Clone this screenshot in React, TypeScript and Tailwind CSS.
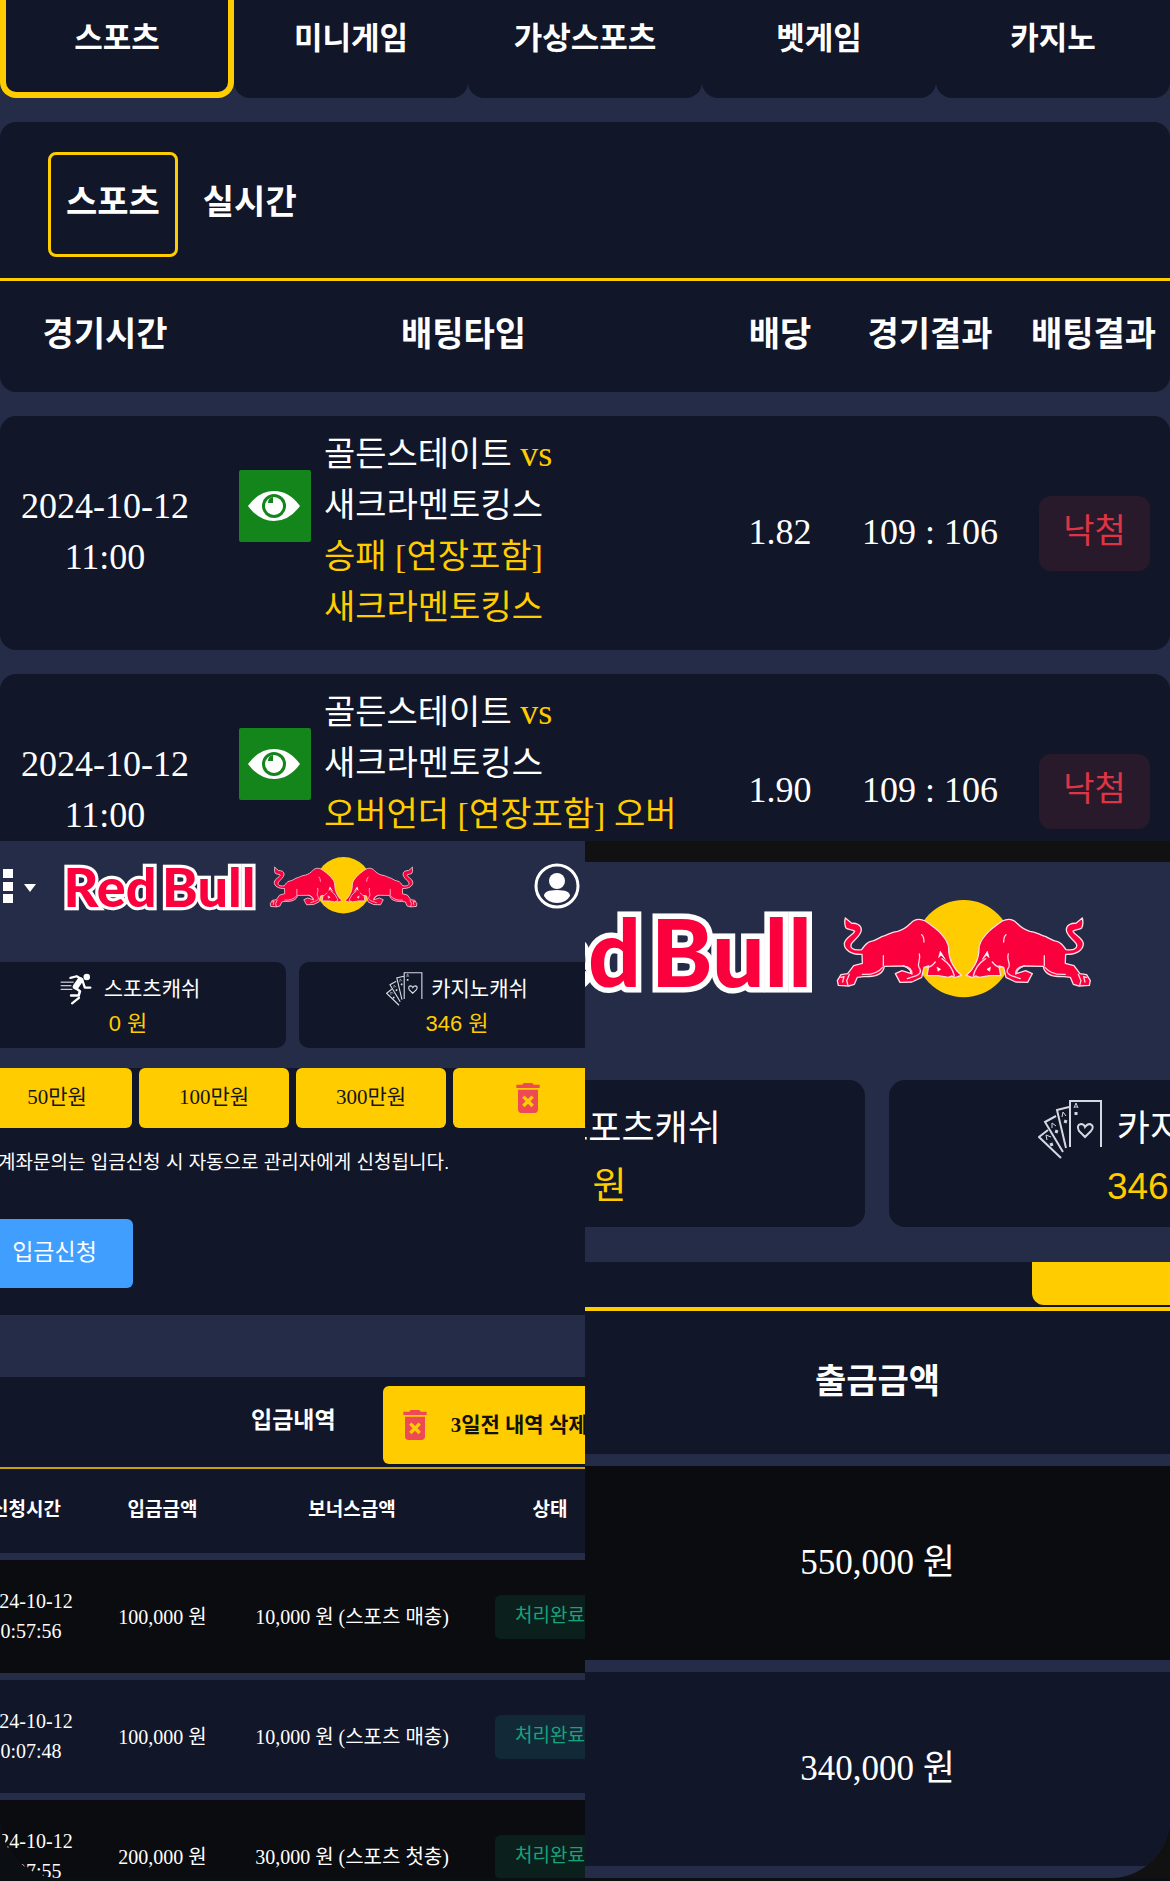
import { MdDeleteForever } from "react-icons/md";

const GAME_TABS = ["스포츠", "미니게임", "가상스포츠", "벳게임", "카지노"];
const BET_HEADS = ["경기시간", "배팅타입", "배당", "경기결과", "배팅결과"];
const DEPOSIT_HEADS = ["신청시간", "입금금액", "보너스금액", "상태"];
const QUICK_AMOUNTS = ["50", "100", "300"];

type Bet = { day: string; time: string; home: string; away: string; picks: string[]; odds: string; score: string; result: string };

const BETS: Bet[] = [
    {
        day: "2024-10-12", time: "11:00", home: "골든스테이트", away: "새크라멘토킹스",
        picks: ["승패 [연장포함]", "새크라멘토킹스"], odds: "1.82", score: "109 : 106", result: "낙첨",
    },
    {
        day: "2024-10-12", time: "11:00", home: "골든스테이트", away: "새크라멘토킹스",
        picks: ["오버언더 [연장포함] 오버"], odds: "1.90", score: "109 : 106", result: "낙첨",
    },
];

const DEPOSITS = [
    { day: "2024-10-12", time: "10:57:56", amount: "100,000", bonus: "10,000 원 (스포츠 매충)" },
    { day: "2024-10-12", time: "10:07:48", amount: "100,000", bonus: "10,000 원 (스포츠 매충)" },
    { day: "2024-10-12", time: "10:07:55", amount: "200,000", bonus: "30,000 원 (스포츠 첫충)" },
];

const WITHDRAWALS = ["550,000", "340,000"];

const BULL =
    "M76 114L95 130C108 129 124 134 124 149C124 165 105 177 95 190C88 202 98 213 125 209C133 198 138 189 150 185C165 183 172 177 185 170C205 165 215 155 233 154C250 150 262 140 272 130C282 119 297 114 316 123C335 136 352 148 365 163C378 178 386 189 386 206C386 240 404 270 424 286L405 293L396 288L385 292L355 287L321 287L326 258L312 262L305 292L276 306L240 307L226 281L246 272L274 281C272 270 262 262 250 258L193 259C190 282 165 291 131 290L112 292L103 313L86 318L55 316L52 302L63 284L83 281L101 257L127 250L126 223C95 224 72 211 73 190C76 172 100 165 104 154C98 148 84 150 78 144C73 134 74 122 76 114Z";

const Bull = () => (
    <g strokeLinejoin="round" strokeLinecap="round">
        <path d={BULL} fill="#fa003c" stroke="#f7dfe6" strokeWidth="4" />
        <g fill="none" stroke="#ffd3df" strokeWidth="4">
            <path d="M190 227L190 257M127 283Q168 286 188 262M298 222C304 240 290 250 297 262C306 274 302 284 280 290L262 296" />
            <path d="M312 186Q312 170 305 164M366 236Q396 256 403 288M88 283L80 302L84 316M63 292L72 290L68 306" />
            <path d="M250 258Q276 262 276 282M318 262Q332 264 346 246" />
        </g>
        <path d="M356 232L361 214L376 238L364 226Z M352 262L362 268L355 273Z" fill="#fff" stroke="#fff" strokeWidth="2" />
    </g>
);

const Logo = ({ className }: { className: string }) => (
    <svg viewBox="0 0 610 100" className={className} role="img" aria-label="Red Bull">
        <g fontSize="93" fontWeight="900" fill="#fa003c" stroke="#fff" strokeWidth="11" paintOrder="stroke" className="font-['Lato',sans-serif]">
            <text x="-1" y="87">Red</text>
            <text x="169" y="87">Bull</text>
        </g>
        <g transform="translate(338 -20) scale(.3333)">
            <circle cx="431" cy="206" r="146" fill="#ffcc00" />
            <Bull />
            <g transform="translate(863 0) scale(-1 1)">
                <Bull />
            </g>
        </g>
    </svg>
);

const Eye = () => (
    <svg viewBox="0 0 72 72" className="size-[72px] shrink-0" aria-hidden="true">
        <rect width="72" height="72" rx="2" fill="#13851b" />
        <path d="M9 36Q20 21 35 21Q50 21 61 36Q50 51 35 51Q20 51 9 36Z" fill="#fff" />
        <circle cx="35" cy="36" r="12" fill="#13851b" />
        <circle cx="35" cy="36" r="9" fill="#fff" />
        <path d="M34 27V33H29Q29 28 34 27Z" fill="#13851b" />
    </svg>
);

const Runner = ({ className }: { className: string }) => (
    <svg viewBox="178 68 98 98" className={className} fill="none" stroke="#fff" strokeLinecap="round" strokeLinejoin="round" aria-hidden="true">
        <circle cx="260" cy="80" r="10" fill="#fff" stroke="none" />
        <path d="M180 96H220M180 107H213M180 118H216" strokeWidth="3" strokeLinecap="butt" />
        <path d="M210 83L229 78L246 88L254 113H271" strokeWidth="7" />
        <path d="M240 90L226 110" strokeWidth="18" />
        <path d="M226 114L239 124L235 137H212" strokeWidth="8" />
        <path d="M236 144L215 161" strokeWidth="7" />
    </svg>
);

const Cards = ({ className }: { className: string }) => (
    <svg viewBox="0 0 65 59" className={className} fill="none" stroke="#d5d8e2" strokeWidth="2" aria-hidden="true">
        <path d="M32 47V1H63V47M31 7L19 10L28 48M18 16L7 22L25 52M10 30L1 37L23 58" />
        <path d="M47 37L41 31Q38 25 43 24Q46 24 47 27Q49 24 52 24Q57 26 53 31Z" />
        <path d="M36 8L38 3L40 8M37 7H39M24 17L25 12L28 16M14 28L14 23L18 26M9 40L8 35L13 37" strokeWidth="1" />
        <path d="M38 15V12M27 23L28 20M18 33L19 30M14 46L13 43" strokeWidth="3" />
    </svg>
);

const BettingHistory = () => (
    <section>
        <nav className="grid grid-cols-5">
            {GAME_TABS.map((tab, i) => (
                <button
                    key={tab}
                    className={`rounded-b-2xl border-6 border-t-0 bg-[#111628] pt-[15px] pb-[29px] text-[31px] leading-12 font-bold ${i === 0 ? "border-[#ffcc00]" : "border-transparent"}`}
                >
                    {tab}
                </button>
            ))}
        </nav>
        <div className="mt-6 flex items-start gap-3 rounded-t-2xl border-b-3 border-[#ffcc00] bg-[#111628] px-12 pt-[30px] pb-[21px] text-[34px] leading-[51px] font-bold">
            <button className="rounded-lg border-3 border-[#ffcc00] px-[15px] pt-[22px] pb-[26px]">스포츠</button>
            <button className="border-3 border-transparent px-2.5 pt-[22px] pb-[26px]">실시간</button>
        </div>
        <table className="-my-6 w-full table-fixed border-separate border-spacing-x-0 border-spacing-y-6">
            <colgroup>
                <col className="w-[210px]" />
                <col />
                <col className="w-[126px]" />
                <col className="w-[174px]" />
                <col className="w-[153px]" />
            </colgroup>
            <thead>
                <tr className="bg-[#111628] text-[34px] leading-[51px]">
                    {BET_HEADS.map((head) => (
                        <th key={head} className="pt-7 pb-8 font-bold whitespace-nowrap first:rounded-bl-2xl last:rounded-br-2xl">{head}</th>
                    ))}
                </tr>
            </thead>
            <tbody>
                {BETS.map((bet, i) => (
                    <tr key={i} className="bg-[#111628] text-center align-top text-4xl leading-[51px]">
                        <td className={`rounded-tl-2xl pt-[65px] ${i === 0 ? "rounded-bl-2xl" : ""}`}>
                            {bet.day}<br />{bet.time}
                        </td>
                        <td className={`pt-[13px] text-left ${i === 0 ? "pb-[17px]" : ""}`}>
                            <div className="flex gap-[13px] pl-[29px]">
                                <button className="mt-[41px] self-start" aria-label="경기 보기"><Eye /></button>
                                <div className="text-[34px] whitespace-nowrap">
                                    <p>{bet.home} <span className="text-4xl leading-[1px] text-[#ffcc00]">vs</span></p>
                                    <p>{bet.away}</p>
                                    {bet.picks.map((pick) => (
                                        <p key={pick} className="text-[#ffcc00]">{pick}</p>
                                    ))}
                                </div>
                            </div>
                        </td>
                        <td className="pt-[91px]">{bet.odds}</td>
                        <td className="pt-[91px]">{bet.score}</td>
                        <td className={`rounded-tr-2xl pt-20 pl-0.5 ${i === 0 ? "rounded-br-2xl" : ""}`}>
                            <span className="inline-block rounded-xl bg-[#291a2b] px-6 pt-2.5 pb-3.5 align-top text-[34px] text-[#dc3545]">{bet.result}</span>
                        </td>
                    </tr>
                ))}
            </tbody>
        </table>
    </section>
);

const DepositPage = () => (
    <section className="h-0 min-h-full overflow-hidden rounded-bl-[60px] bg-[#252c47]">
        <header className="flex items-center pt-4 pr-[5px] pb-[47px]">
            <button aria-label="메뉴">
                <svg viewBox="0 0 36 34" className="h-[34px] w-9" fill="#fff">
                    <path d="M3 0h10v9H3zM3 13h10v9H3zM3 25h10v9H3zM24 15h12l-6 8z" />
                </svg>
            </button>
            <a href="#" className="ml-7"><Logo className="h-[58px] w-[354px]" /></a>
            <button className="ml-auto" aria-label="내 정보">
                <svg viewBox="0 0 46 46" className="size-[46px]" fill="#fff">
                    <circle cx="23" cy="23" r="21" fill="none" stroke="#fff" strokeWidth="3" />
                    <circle cx="23" cy="18" r="8" />
                    <path d="M10 33Q10 27 23 27Q36 27 36 33Q32 40 23 40Q14 40 10 33Z" />
                </svg>
            </button>
        </header>
        <div className="-ml-[30px] flex gap-[13px] text-center font-['Liberation_Sans','Noto_Sans_CJK_KR',sans-serif] text-[21px]">
            <div className="w-[316px] shrink-0 rounded-[10px] bg-[#111628] pt-[9px] pb-[7px]">
                <div className="flex h-9 items-center justify-center gap-3 pl-1"><Runner className="size-8" />스포츠캐쉬</div>
                <p className="text-[22px] leading-[34px] text-[#ffcc00]">0 원</p>
            </div>
            <div className="w-[316px] shrink-0 rounded-[10px] bg-[#111628] pt-[9px] pb-[7px]">
                <div className="flex h-9 items-center justify-center gap-2"><Cards className="h-[34px] w-[37px]" />카지노캐쉬</div>
                <p className="text-[22px] leading-[34px] text-[#ffcc00]">346 원</p>
            </div>
        </div>
        <div className="mt-5 bg-[#111628] pb-[27px]">
            <div className="-ml-[18px] flex gap-[7px]">
                {QUICK_AMOUNTS.map((amount) => (
                    <button key={amount} className="h-[60px] w-[150px] shrink-0 rounded-md bg-[#ffcc00] text-[21px] text-[#15151a]">{amount}만원</button>
                ))}
                <button className="flex h-[60px] w-[150px] shrink-0 items-center justify-center rounded-md bg-[#ffcc00]" aria-label="금액 지우기">
                    <MdDeleteForever className="size-10 text-[#ed4a55]" />
                </button>
            </div>
            <p className="-ml-0.5 mt-[21px] font-['Liberation_Sans','Noto_Sans_CJK_KR',sans-serif] text-[19px] leading-7 whitespace-nowrap">
                계좌문의는 입금신청 시 자동으로 관리자에게 신청됩니다.
            </p>
            <button className="-ml-6 mt-[42px] w-[157px] rounded-md bg-[#409eff] pt-[17px] pb-[18px] text-[23px] leading-[34px]">입금신청</button>
        </div>
        <div className="mt-[62px] flex items-start border-b-2 border-[#c9a10c] bg-[#111628] pt-[9px] pb-[3px] pl-[251px]">
            <h2 className="shrink-0 pt-[17px] text-[23px] leading-9 font-bold">입금내역</h2>
            <button className="ml-[47px] flex w-[280px] shrink-0 items-center gap-4 rounded-md bg-[#ffcc00] py-[19px] pl-3 text-[21px] leading-[38px] font-bold text-[#111]">
                <MdDeleteForever className="size-10 text-[#ed4a55]" />3일전 내역 삭제
            </button>
        </div>
        <div className="bg-[#111628]">
            <table className="-ml-10 w-[669px] table-fixed border-collapse text-center">
                <colgroup>
                    <col className="w-[132px]" />
                    <col className="w-[141px]" />
                    <col className="w-[238px]" />
                    <col className="w-[158px]" />
                </colgroup>
                <thead>
                    <tr className="border-b-7 border-[#252c47]">
                        {DEPOSIT_HEADS.map((head) => (
                            <th key={head} className="pt-[25px] pb-[27px] text-[19px] leading-8 font-bold">{head}</th>
                        ))}
                    </tr>
                </thead>
                <tbody>
                    {DEPOSITS.map((row) => (
                        <tr key={row.time} className="group border-b-7 border-[#252c47] text-xl leading-[30px] odd:bg-[#0b0c10]">
                            <td className="pt-[26px] pb-[27px]">{row.day}<br />{row.time}</td>
                            <td>{row.amount} 원</td>
                            <td className="whitespace-nowrap">{row.bonus}</td>
                            <td>
                                <span className="inline-block rounded-md bg-[#122a38] px-5 pt-1.5 pb-2 align-middle text-[19px] text-[#16a37c] group-odd:bg-[#0b201c]">처리완료</span>
                            </td>
                        </tr>
                    ))}
                </tbody>
            </table>
        </div>
    </section>
);

const WithdrawPage = () => (
    <section className="bg-[#111] pt-[21px]">
        <div className="overflow-hidden rounded-br-[60px] bg-[#252c47]">
            <header className="pt-[38px] pb-20">
                <a href="#" className="-ml-[103px] flex"><Logo className="h-[100px] w-[610px] shrink-0" /></a>
            </header>
            <div className="-ml-[262px] flex gap-6 text-center font-['Liberation_Sans','Noto_Sans_CJK_KR',sans-serif] text-4xl">
                <div className="w-[542px] shrink-0 rounded-2xl bg-[#111628] pt-[21px] pb-[11px]">
                    <div className="flex h-14 items-center justify-center gap-5 pl-3"><Runner className="size-14" />스포츠캐쉬</div>
                    <p className="text-[37px] leading-[59px] text-[#ffcc00]">0 원</p>
                </div>
                <div className="w-[542px] shrink-0 rounded-2xl bg-[#111628] pt-[21px] pb-[11px]">
                    <div className="flex h-14 items-center justify-center gap-3.5"><Cards className="h-[59px] w-[65px]" />카지노캐쉬</div>
                    <p className="text-[37px] leading-[59px] text-[#ffcc00]">346 원</p>
                </div>
            </div>
            <div className="mt-[35px] flex justify-end border-b-4 border-[#ffcc00] bg-[#111628] pb-0.5">
                <button className="h-[43px] w-[138px] rounded-bl-xl bg-[#ffcc00]" aria-label="내역 삭제" />
            </div>
            <table className="w-full border-collapse bg-[#111628] text-center">
                <thead>
                    <tr className="border-b-12 border-[#252c47]">
                        <th className="pt-[45px] pb-[47px] text-[34px] leading-[51px] font-bold">출금금액</th>
                    </tr>
                </thead>
                <tbody>
                    {WITHDRAWALS.map((amount) => (
                        <tr key={amount} className="border-b-12 border-[#252c47] odd:bg-[#0b0c10]">
                            <td className="pt-[71px] pb-[72px] text-[35px] leading-[51px]">{amount} 원</td>
                        </tr>
                    ))}
                </tbody>
            </table>
        </div>
    </section>
);

export default function App() {
    return (
        <main className="overflow-hidden bg-[#252c47] font-['Liberation_Serif','Noto_Sans_CJK_KR',serif] text-white">
            <BettingHistory />
            <div className="grid grid-cols-2 bg-[#0b0e12] pb-[3px]">
                <DepositPage />
                <WithdrawPage />
            </div>
        </main>
    );
}
